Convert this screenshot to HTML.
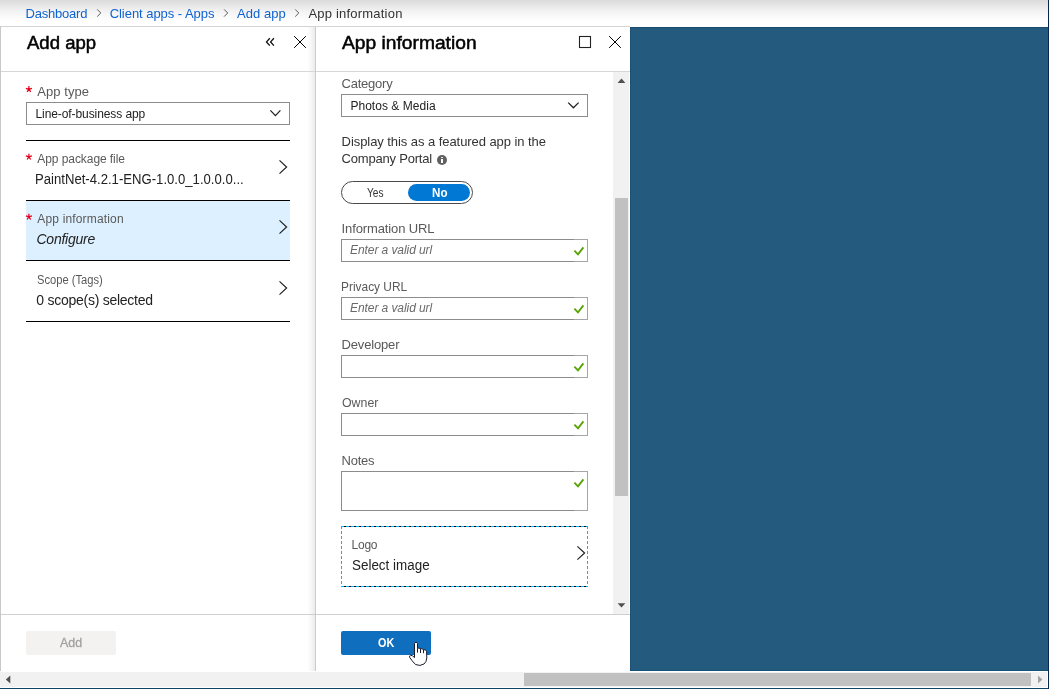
<!DOCTYPE html>
<html>
<head>
<meta charset="utf-8">
<title>Add app - App information</title>
<style>
html,body{margin:0;padding:0;}
body{width:1049px;height:689px;overflow:hidden;position:relative;background:#fff;font-family:"Liberation Sans",sans-serif;}
.a{position:absolute;box-sizing:border-box;}
.t{position:absolute;white-space:pre;line-height:20px;transform-origin:0 50%;}
.inp{position:absolute;box-sizing:border-box;border:1px solid #8c8c8c;background:#fff;left:341px;width:247px;height:23px;}
svg{position:absolute;overflow:visible;}
</style>
</head>
<body>
<!-- blue backdrop -->
<div class="a" style="left:630px;top:27px;width:419px;height:644px;background:#235a7d;"></div>
<div class="a" style="left:630px;top:27px;width:1px;height:644px;background:#1d5073;"></div>
<div class="a" style="left:630px;top:27px;width:419px;height:1px;background:#174c70;"></div>
<div class="a" style="left:630px;top:670px;width:419px;height:1px;background:#15527a;"></div>

<!-- breadcrumb bar -->
<div class="a" style="left:0;top:0;width:1049px;height:26px;background:linear-gradient(#dadada 0px,#e6e6e6 5px,#f4f4f4 12px,#fff 21px);"></div>
<div class="a" style="left:0;top:26px;width:630px;height:1px;background:#d4d4d4;"></div>

<!-- left panel -->
<div class="a" style="left:0;top:27px;width:315px;height:644px;background:#fff;"></div>
<div class="a" style="left:0;top:26px;width:1px;height:645px;background:#c8c8c8;"></div>
<!-- shadow before divider -->
<div class="a" style="left:307px;top:27px;width:8px;height:644px;background:linear-gradient(90deg,rgba(0,0,0,0),rgba(0,0,0,0.025) 40%,rgba(0,0,0,0.08));"></div>
<div class="a" style="left:315px;top:27px;width:1px;height:644px;background:#cccccc;"></div>
<!-- right panel -->
<div class="a" style="left:316px;top:27px;width:314px;height:644px;background:#fff;"></div>

<!-- header borders -->
<div class="a" style="left:1px;top:71px;width:314px;height:1px;background:#d6d6d6;"></div>
<div class="a" style="left:316px;top:71px;width:314px;height:1px;background:#d6d6d6;"></div>
<!-- footer borders -->
<div class="a" style="left:1px;top:614px;width:314px;height:1px;background:#cfcfcf;"></div>
<div class="a" style="left:316px;top:614px;width:314px;height:1px;background:#cfcfcf;"></div>

<!-- breadcrumb chevrons -->
<svg style="left:0;top:0" width="420" height="27" fill="none" stroke="#5c5c5c" stroke-width="1">
  <polyline points="97.2,9.4 100.8,13 97.2,16.6"/>
  <polyline points="224.1,9.4 227.7,13 224.1,16.6"/>
  <polyline points="295.2,9.4 298.8,13 295.2,16.6"/>
</svg>

<!-- left header icons -->
<svg style="left:0;top:27px" width="316" height="45" fill="none" stroke="#111" stroke-width="1.35">
  <!-- double chevron -->
  <polyline points="269.8,11.2 266.5,14.9 269.8,18.6"/>
  <polyline points="273.9,11.2 270.6,14.9 273.9,18.6"/>
  <!-- close -->
  <path d="M294.5 9.5 L305.5 20.5 M305.5 9.5 L294.5 20.5" stroke="#000" stroke-width="1" stroke-linecap="square"/>
</svg>
<!-- right header icons -->
<svg style="left:316px;top:27px" width="314" height="45" fill="none" stroke="#222" stroke-width="1.1">
  <rect x="263.5" y="9.5" width="11" height="11"/>
  <path d="M293.5 9.5 L304.5 20.5 M304.5 9.5 L293.5 20.5" stroke="#000" stroke-width="1" stroke-linecap="square"/>
</svg>

<!-- LEFT PANEL CONTENT -->
<!-- app type select -->
<div class="a" style="left:26px;top:102px;width:264px;height:23px;border:1px solid #8c8c8c;background:#fff;"></div>
<svg style="left:0;top:0" width="316" height="140" fill="none" stroke="#222" stroke-width="1.3">
  <polyline points="270.4,110.4 275.4,115.6 280.4,110.4"/>
</svg>
<!-- selector rows -->
<div class="a" style="left:26px;top:201px;width:264px;height:59px;background:#ddf0ff;"></div>
<div class="a" style="left:26px;top:140px;width:264px;height:1px;background:#000;"></div>
<div class="a" style="left:26px;top:200px;width:264px;height:1px;background:#000;"></div>
<div class="a" style="left:26px;top:260px;width:264px;height:1px;background:#000;"></div>
<div class="a" style="left:26px;top:321px;width:264px;height:1px;background:#000;"></div>
<svg style="left:0;top:0" width="316" height="330" fill="none" stroke="#222" stroke-width="1.2">
  <polyline points="279.5,160.4 286.6,167 279.5,173.6"/>
  <polyline points="279.5,220.4 286.6,227 279.5,233.6"/>
  <polyline points="279.5,281.4 286.6,288 279.5,294.6"/>
</svg>

<!-- required asterisks -->
<svg style="left:0;top:0" width="60" height="300" stroke="#e3001b" stroke-width="1.25" fill="none">
  <path d="M28.9 89.3 V86.1 M28.9 89.3 L25.9 88.3 M28.9 89.3 L31.9 88.3 M28.9 89.3 L27.1 91.9 M28.9 89.3 L30.7 91.9"/>
  <path d="M28.9 89.3 V86.1 M28.9 89.3 L25.9 88.3 M28.9 89.3 L31.9 88.3 M28.9 89.3 L27.1 91.9 M28.9 89.3 L30.7 91.9" transform="translate(0,67.6)"/>
  <path d="M28.9 89.3 V86.1 M28.9 89.3 L25.9 88.3 M28.9 89.3 L31.9 88.3 M28.9 89.3 L27.1 91.9 M28.9 89.3 L30.7 91.9" transform="translate(0,127.6)"/>
</svg>

<!-- Add button -->
<div class="a" style="left:26px;top:631px;width:90px;height:24px;background:#f3f2f1;border-radius:2px;"></div>

<!-- RIGHT PANEL CONTENT -->
<!-- category select -->
<div class="inp" style="top:94px;"></div>
<svg style="left:316px;top:72px" width="300" height="60" fill="none" stroke="#222" stroke-width="1.3">
  <polyline points="252.2,30.6 257.4,35.8 262.6,30.6"/>
</svg>
<!-- info icon -->
<svg style="left:437px;top:155px" width="10" height="10">
  <circle cx="5" cy="5" r="5" fill="#606060"/>
  <rect x="4" y="4" width="2" height="4" fill="#fff"/>
  <rect x="4" y="2" width="2" height="1" fill="#e8e8e8"/>
</svg>
<!-- toggle -->
<div class="a" style="left:341px;top:181px;width:132px;height:23px;border:1px solid #4a4a4a;border-radius:12px;background:#fff;"></div>
<div class="a" style="left:408px;top:184px;width:62px;height:17px;border-radius:9px;background:#0078d4;"></div>

<!-- inputs -->
<div class="inp" style="top:239px;"></div>
<div class="inp" style="top:297px;"></div>
<div class="inp" style="top:355px;"></div>
<div class="inp" style="top:413px;"></div>
<div class="inp" style="top:471px;height:40px;"></div>
<div class="a" style="left:574px;top:239px;width:14px;height:23px;border:1px solid #a6a6a6;border-left:none;"></div>
<div class="a" style="left:574px;top:297px;width:14px;height:23px;border:1px solid #a6a6a6;border-left:none;"></div>
<div class="a" style="left:574px;top:355px;width:14px;height:23px;border:1px solid #a6a6a6;border-left:none;"></div>
<div class="a" style="left:574px;top:413px;width:14px;height:23px;border:1px solid #a6a6a6;border-left:none;"></div>
<div class="a" style="left:574px;top:471px;width:14px;height:40px;border:1px solid #a6a6a6;border-left:none;"></div>
<!-- check marks -->
<svg style="left:0;top:0" width="640" height="520" fill="none" stroke="#57a300" stroke-width="1.8">
  <polyline points="574.4,250.6 578,254.4 583.4,247.4" transform="translate(0,0)"/>
  <polyline points="574.4,250.6 578,254.4 583.4,247.4" transform="translate(0,58)"/>
  <polyline points="574.4,250.6 578,254.4 583.4,247.4" transform="translate(0,116)"/>
  <polyline points="574.4,250.6 578,254.4 583.4,247.4" transform="translate(0,174)"/>
  <polyline points="574.4,250.6 578,254.4 583.4,247.4" transform="translate(0,232)"/>
</svg>

<!-- logo selector (dashed focus) -->
<svg style="left:341px;top:526px" width="247" height="61" fill="none" shape-rendering="crispEdges">
  <line x1="0" y1="0.5" x2="247" y2="0.5" stroke="#00b7f1" stroke-width="1"/>
  <line x1="0" y1="60.5" x2="247" y2="60.5" stroke="#00b7f1" stroke-width="1"/>
  <line x1="3" y1="0.5" x2="247" y2="0.5" stroke="#000" stroke-width="1" stroke-dasharray="2 3"/>
  <line x1="3" y1="60.5" x2="247" y2="60.5" stroke="#000" stroke-width="1" stroke-dasharray="2 3"/>
  <line x1="0.5" y1="0" x2="0.5" y2="61" stroke="#00b7f1" stroke-width="1" stroke-dasharray="3 2"/>
  <line x1="246.5" y1="0" x2="246.5" y2="61" stroke="#00b7f1" stroke-width="1" stroke-dasharray="3 2"/>
</svg>
<svg style="left:0;top:0" width="640" height="600" fill="none" stroke="#222" stroke-width="1.2">
  <polyline points="577.4,546.4 584.6,553 577.4,559.6"/>
</svg>

<!-- vertical scrollbar -->
<div class="a" style="left:613px;top:72px;width:16px;height:542px;background:#f1f1f1;"></div>
<div class="a" style="left:615px;top:198px;width:13px;height:298px;background:#c1c1c1;"></div>
<svg style="left:613px;top:72px" width="17" height="542" fill="#505050">
  <polygon points="8.5,6.6 12.4,10.9 4.6,10.9"/>
  <polygon points="4.6,531.2 12.4,531.2 8.5,535.4"/>
</svg>

<!-- OK button -->
<div class="a" style="left:341px;top:631px;width:90px;height:24px;background:#106ebe;border-radius:2px;"></div>

<div id="tx" style="position:absolute;left:0;top:0;width:1049px;height:689px;will-change:transform;">
<span class="t" style="left:25.60px;top:3.50px;font-size:13px;letter-spacing:-0.226px;color:#0f62d0">Dashboard</span>
<span class="t" style="left:109.70px;top:3.50px;font-size:13px;letter-spacing:-0.048px;color:#0f62d0">Client apps - Apps</span>
<span class="t" style="left:237.00px;top:3.50px;font-size:13px;letter-spacing:0.060px;color:#0f62d0">Add app</span>
<span class="t" style="left:308.40px;top:3.50px;font-size:13px;letter-spacing:0.210px;color:#333">App information</span>
<span class="t" style="left:26.50px;top:32.76px;font-size:18px;transform:scaleX(1.0304);color:#000;-webkit-text-stroke:0.5px #000">Add app</span>
<span class="t" style="left:341.70px;top:32.76px;font-size:18px;transform:scaleX(1.0676);color:#000;-webkit-text-stroke:0.5px #000">App information</span>
<span class="t" style="left:37.30px;top:81.70px;font-size:13px;letter-spacing:0.053px;color:#595959">App type</span>
<span class="t" style="left:35.50px;top:104.04px;font-size:12px;letter-spacing:-0.085px;color:#222">Line-of-business app</span>
<span class="t" style="left:37.30px;top:148.84px;font-size:12px;letter-spacing:-0.069px;color:#595959">App package file</span>
<span class="t" style="left:35.30px;top:169.15px;font-size:14px;transform:scaleX(0.9376);color:#222">PaintNet-4.2.1-ENG-1.0.0_1.0.0.0...</span>
<span class="t" style="left:37.30px;top:209.04px;font-size:12px;letter-spacing:0.161px;color:#595959">App information</span>
<span class="t" style="left:36.50px;top:228.95px;font-size:14px;letter-spacing:-0.250px;color:#222;font-style:italic">Configure</span>
<span class="t" style="left:36.50px;top:269.84px;font-size:12px;transform:scaleX(0.9292);color:#595959">Scope (Tags)</span>
<span class="t" style="left:36.30px;top:290.15px;font-size:14px;letter-spacing:-0.261px;color:#222">0 scope(s) selected</span>
<span class="t" style="left:341.60px;top:73.50px;font-size:13px;letter-spacing:-0.236px;color:#595959">Category</span>
<span class="t" style="left:350.40px;top:95.84px;font-size:12px;letter-spacing:0.037px;color:#222">Photos &amp; Media</span>
<span class="t" style="left:341.60px;top:131.50px;font-size:13px;letter-spacing:-0.064px;color:#333">Display this as a featured app in the</span>
<span class="t" style="left:341.60px;top:148.50px;font-size:13px;letter-spacing:-0.201px;color:#333">Company Portal</span>
<span class="t" style="left:366.70px;top:182.84px;font-size:12px;transform:scaleX(0.8479);color:#333">Yes</span>
<span class="t" style="left:431.50px;top:182.84px;font-size:12px;transform:scaleX(0.9688);color:#fff;font-weight:bold">No</span>
<span class="t" style="left:341.60px;top:218.50px;font-size:13px;letter-spacing:-0.118px;color:#595959">Information URL</span>
<span class="t" style="left:350.00px;top:240.34px;font-size:12px;letter-spacing:-0.073px;color:#6a6a6a;font-style:italic">Enter a valid url</span>
<span class="t" style="left:340.60px;top:276.50px;font-size:13px;transform:scaleX(0.9163);color:#595959">Privacy URL</span>
<span class="t" style="left:350.00px;top:298.34px;font-size:12px;letter-spacing:-0.073px;color:#6a6a6a;font-style:italic">Enter a valid url</span>
<span class="t" style="left:341.60px;top:334.50px;font-size:13px;letter-spacing:-0.171px;color:#595959">Developer</span>
<span class="t" style="left:341.60px;top:392.50px;font-size:13px;transform:scaleX(0.9505);color:#595959">Owner</span>
<span class="t" style="left:341.60px;top:450.50px;font-size:13px;letter-spacing:-0.267px;color:#595959">Notes</span>
<span class="t" style="left:351.60px;top:535.04px;font-size:12px;letter-spacing:-0.268px;color:#595959">Logo</span>
<span class="t" style="left:351.60px;top:554.95px;font-size:14px;transform:scaleX(0.9588);color:#222">Select image</span>
<span class="t" style="left:59.90px;top:632.50px;font-size:13px;transform:scaleX(0.9550);color:#a19f9d;-webkit-text-stroke:0.3px #a19f9d">Add</span>
<span class="t" style="left:377.80px;top:632.50px;font-size:13px;transform:scaleX(0.8308);color:#fff;font-weight:bold">OK</span>
</div>

<!-- horizontal scrollbar -->
<div class="a" style="left:0;top:671px;width:1049px;height:1px;background:#fff;"></div>
<div class="a" style="left:0;top:672px;width:1047px;height:15px;background:#f1f1f1;"></div>
<div class="a" style="left:1047px;top:671px;width:1px;height:17px;background:#fff;"></div>
<div class="a" style="left:0;top:687px;width:1049px;height:1px;background:#fff;"></div>
<div class="a" style="left:0;top:688px;width:1049px;height:1px;background:#0e4468;"></div>
<div class="a" style="left:1048px;top:0;width:1px;height:689px;background:#0a2552;"></div>
<div class="a" style="left:524px;top:673px;width:507px;height:13px;background:#c1c1c1;"></div>
<svg style="left:0;top:671px" width="1049" height="17">
  <polygon points="5.8,8.5 10.3,4.6 10.3,12.4" fill="#505050"/>
  <polygon points="1042.4,8.5 1038,4.6 1038,12.4" fill="#a3a3a3"/>
</svg>

<!-- hand cursor -->
<svg style="left:0;top:0" width="640" height="689">
  <path d="M414.5 643.6 Q414.5 642.3 416 642.3 Q417.5 642.3 417.5 643.6 L417.5 648.3 Q419 647.6 420.5 648.7 Q422 648.3 423.5 649.7 Q425.6 649.4 426.6 651.2 L426.8 658 Q426.5 662 424 664 Q420 666.6 415.5 664.5 Q412 661 409.6 657.2 Q409.2 655.6 410.5 655.2 Q412.5 655.2 414.5 657.6 Z" fill="#fff" stroke="#1b1b2b" stroke-width="1"/>
  <path d="M417.5 648.3 V652.6 M420.5 648.7 V653 M423.5 649.7 V653.2" fill="none" stroke="#1b1b2b" stroke-width="1"/>
</svg>
</body>
</html>
